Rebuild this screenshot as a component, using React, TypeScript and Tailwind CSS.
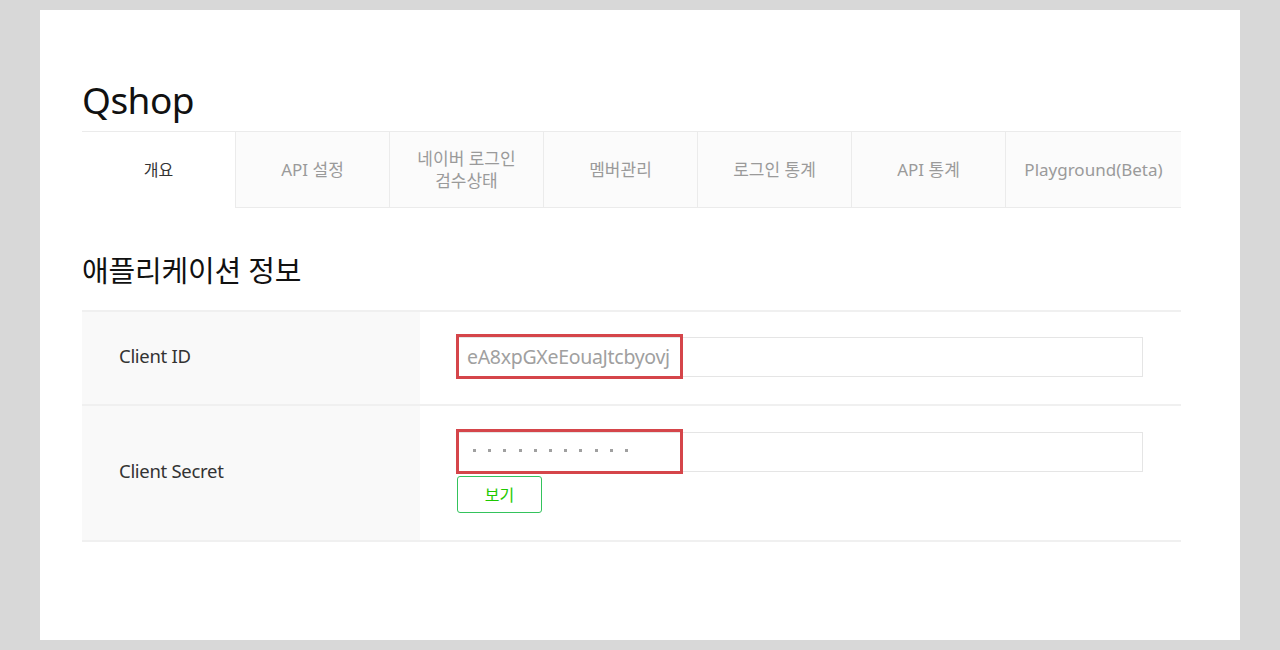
import React from "react";

const tabs = ["API 설정", "네이버 로그인\n검수상태", "멤버관리", "로그인 통계", "API 통계", "Playground(Beta)"];

export default function App() {
  return (
    <div
      className="w-[1280px] h-[650px] bg-[#d8d8d8] pt-[10px] pl-[40px]"
      style={{ fontFamily: '"Noto Sans", "Noto Sans CJK KR", sans-serif' }}
    >
      <div className="w-[1200px] h-[630px] bg-white pl-[42px] pr-[59px] pt-[68px]">
        <h1 className="text-[37px] leading-[44px] text-[#111] tracking-[-0.5px] h-[53px]">Qshop</h1>
        <div className="flex border-t border-[#ebebeb] h-[77px]">
          <div className="w-[153px] flex items-center justify-center text-[16px] text-[#333] bg-white">개요</div>
          {tabs.map((t, i) => (
            <div
              key={t}
              className={
                i === tabs.length - 1
                  ? "flex-1 flex items-center justify-center text-center whitespace-pre-line text-[17px] leading-[22px] text-[#9a9a9a] bg-[#fbfbfb] border-l border-b border-[#ebebeb]"
                  : "w-[154px] flex items-center justify-center text-center whitespace-pre-line text-[17px] leading-[22px] text-[#9a9a9a] bg-[#fbfbfb] border-l border-b border-[#ebebeb]"
              }
            >
              {t}
            </div>
          ))}
        </div>
        <h2 className="mt-[45px] text-[29px] leading-[36px] text-[#111] font-normal tracking-[-0.2px]">애플리케이션 정보</h2>
        <div className="mt-[21px] border-t-2 border-[#f0f0f0]">
          <div className="flex border-b-2 border-[#f0f0f0] h-[94px]">
            <div className="w-[338px] bg-[#f9f9f9] flex items-center pl-[37px] pb-[5px] text-[18.5px] text-[#333] tracking-[-0.3px]">Client ID</div>
            <div className="flex-1 pl-[37px] pt-[25px]">
              <div className="relative w-[686px] h-[40px] border border-[#e5e5e5] flex items-center pl-[9px] text-[19.5px] text-[#a0a0a0] tracking-[-0.3px]">
                eA8xpGXeEouaJtcbyovj
                <div className="absolute left-[-2px] top-[-4px] w-[227px] h-[45px] border-[3px] border-[#d5454a]" />
              </div>
            </div>
          </div>
          <div className="flex border-b-2 border-[#f0f0f0] h-[136px]">
            <div className="w-[338px] bg-[#f9f9f9] flex items-center pl-[37px] pb-[5px] text-[18.5px] text-[#333] tracking-[-0.3px]">Client Secret</div>
            <div className="flex-1 pl-[37px] pt-[26px]">
              <div className="relative w-[686px] h-[40px] border border-[#e5e5e5] flex items-center pl-[15px] text-[#a0a0a0]">
                <div className="flex gap-[12.2px] mt-[-3px]">
                  {Array.from({ length: 11 }).map((_, i) => (
                    <span key={i} className="w-[3px] h-[3px] bg-[#a0a0a0] inline-block" />
                  ))}
                </div>
                <div className="absolute left-[-2px] top-[-4px] w-[227px] h-[45px] border-[3px] border-[#d5454a]" />
              </div>
              <button className="mt-[4px] w-[85px] h-[37px] border border-[#34c35c] rounded-[3px] text-[16px] text-[#1ec800] bg-white">보기</button>
            </div>
          </div>
        </div>
      </div>
    </div>
  );
}
